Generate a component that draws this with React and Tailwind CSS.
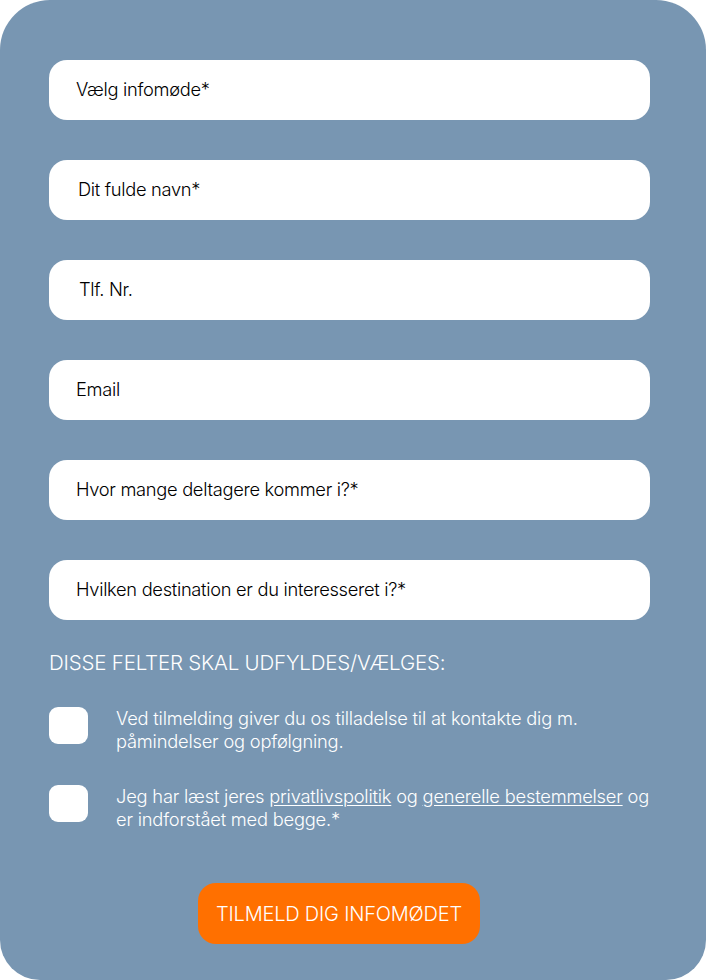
export default function App() {
  const fields = [
    { label: "Vælg infomøde*", pl: "pl-[27px]" },
    { label: "Dit fulde navn*", pl: "pl-[29px]" },
    { label: "Tlf. Nr.", pl: "pl-[30px]" },
    { label: "Email", pl: "pl-[27px]" },
    { label: "Hvor mange deltagere kommer i?*", pl: "pl-[27px]" },
    { label: "Hvilken destination er du interesseret i?*", pl: "pl-[27px]" },
  ];
  return (
    <div className="w-[706px] h-[980px] bg-[#7896b2] rounded-t-[50px] rounded-b-[40px] pt-[60px] px-[49px] font-['Inter',sans-serif]">
      <div className="w-[601px] flex flex-col gap-[40px]">
        {fields.map((f) => (
          <div
            key={f.label}
            className={`h-[60px] bg-white rounded-[18px] flex items-center ${f.pl} text-[18.3px] font-light text-black tracking-[-0.3px]`}
          >
            {f.label}
          </div>
        ))}
      </div>
      <div className="mt-[30px] text-white text-[20.5px] font-light leading-[26px] tracking-[-0.2px]">
        DISSE FELTER SKAL UDFYLDES/VÆLGES:
      </div>
      <div className="mt-[31px] flex flex-col gap-[32px]">
        <div className="flex items-start">
          <div className="w-[39px] h-[37px] bg-white rounded-[9px] shrink-0" />
          <div className="ml-[28px] text-white text-[18.3px] font-light leading-[23px] w-[540px] tracking-[-0.2px]">
            Ved tilmelding giver du os tilladelse til at kontakte dig m. påmindelser og opfølgning.
          </div>
        </div>
        <div className="flex items-start">
          <div className="w-[39px] h-[37px] bg-white rounded-[9px] shrink-0" />
          <div className="ml-[28px] text-white text-[18.3px] font-light leading-[23px] w-[540px] tracking-[-0.2px]">
            Jeg har læst jeres <span className="underline underline-offset-2">privatlivspolitik</span> og{" "}
            <span className="underline underline-offset-2">generelle bestemmelser</span> og er indforstået med begge.*
          </div>
        </div>
      </div>
      <div className="mt-[52px] flex">
        <div className="ml-[149px] w-[282px] h-[61px] bg-[#ff7000] rounded-[18px] flex items-center justify-center text-white text-[20px] font-light tracking-[-0.2px]">
          TILMELD DIG INFOMØDET
        </div>
      </div>
    </div>
  );
}
